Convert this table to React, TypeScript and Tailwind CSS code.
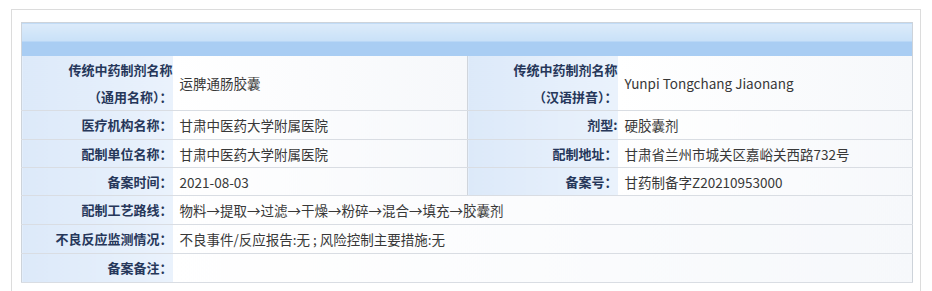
const font = { fontFamily: '"Noto Sans CJK SC", "Noto Sans", sans-serif' };

const Label = ({ children, className = '' }: any) => (
  <td
    className={`w-[151px] border-b border-[#d9dde3] bg-[linear-gradient(to_right,#dce9f9,#eaf2fc)] p-0 text-right align-middle text-[13px] font-bold text-[#26375a] ${className}`}
  >
    {children}
  </td>
);

const Value = ({ children, colSpan, className = '' }: any) => (
  <td
    colSpan={colSpan}
    className={`border-b border-[#d9dde3] bg-[linear-gradient(to_right,#ffffff,#f6f8fb)] py-0 pl-[7px] align-middle text-[13.5px] text-[#383838] ${className}`}
  >
    {children}
  </td>
);

export default function App() {
  const rows = [
    { label: '配制工艺路线：', value: '物料→提取→过滤→干燥→粉碎→混合→填充→胶囊剂' },
    { label: '不良反应监测情况：', value: '不良事件/反应报告:无 ; 风险控制主要措施:无' },
    { label: '备案备注：', value: '' },
  ];

  return (
    <div className="h-[291px] w-[932px] overflow-hidden bg-white pl-[11px] pt-[9px]" style={font}>
      <div className="h-[300px] w-[910px] border border-[#dcdcdc] pl-[9px] pt-3">
        <table className="w-[891px] table-fixed border-collapse border border-[#cdd3da] leading-[24px]">
          <colgroup>
            <col className="w-[151px]" />
            <col className="w-[295px]" />
            <col className="w-[150px]" />
            <col className="w-[295px]" />
          </colgroup>
          <tbody>
            <tr className="h-[33px]">
              <td
                colSpan={4}
                className="bg-[linear-gradient(#dcebfa,#c9e1f8_54%,#a9cdf3_54%,#a9cdf3)] p-0"
              />
            </tr>
            <tr className="h-[55px]">
              <Label className="leading-[27px]">
                <div>传统中药制剂名称</div>
                <div>（通用名称）：</div>
              </Label>
              <Value className="border-r border-r-[#d0d5dc]">运脾通肠胶囊</Value>
              <Label className="leading-[27px]">
                <div>传统中药制剂名称</div>
                <div>（汉语拼音）：</div>
              </Label>
              <Value>Yunpi Tongchang Jiaonang</Value>
            </tr>
            <tr className="h-[29px]">
              <Label>医疗机构名称：</Label>
              <Value className="border-r border-r-[#d0d5dc]">甘肃中医药大学附属医院</Value>
              <Label>剂型:</Label>
              <Value>硬胶囊剂</Value>
            </tr>
            <tr className="h-[28px]">
              <Label>配制单位名称：</Label>
              <Value className="border-r border-r-[#d0d5dc]">甘肃中医药大学附属医院</Value>
              <Label>配制地址：</Label>
              <Value>甘肃省兰州市城关区嘉峪关西路732号</Value>
            </tr>
            <tr className="h-[28px]">
              <Label>备案时间：</Label>
              <Value className="border-r border-r-[#d0d5dc]">2021-08-03</Value>
              <Label>备案号：</Label>
              <Value>甘药制备字Z20210953000</Value>
            </tr>
            {rows.map((r) => (
              <tr key={r.label} className="h-[29px]">
                <Label>{r.label}</Label>
                <Value colSpan={3}>{r.value}</Value>
              </tr>
            ))}
          </tbody>
        </table>
      </div>
    </div>
  );
}
